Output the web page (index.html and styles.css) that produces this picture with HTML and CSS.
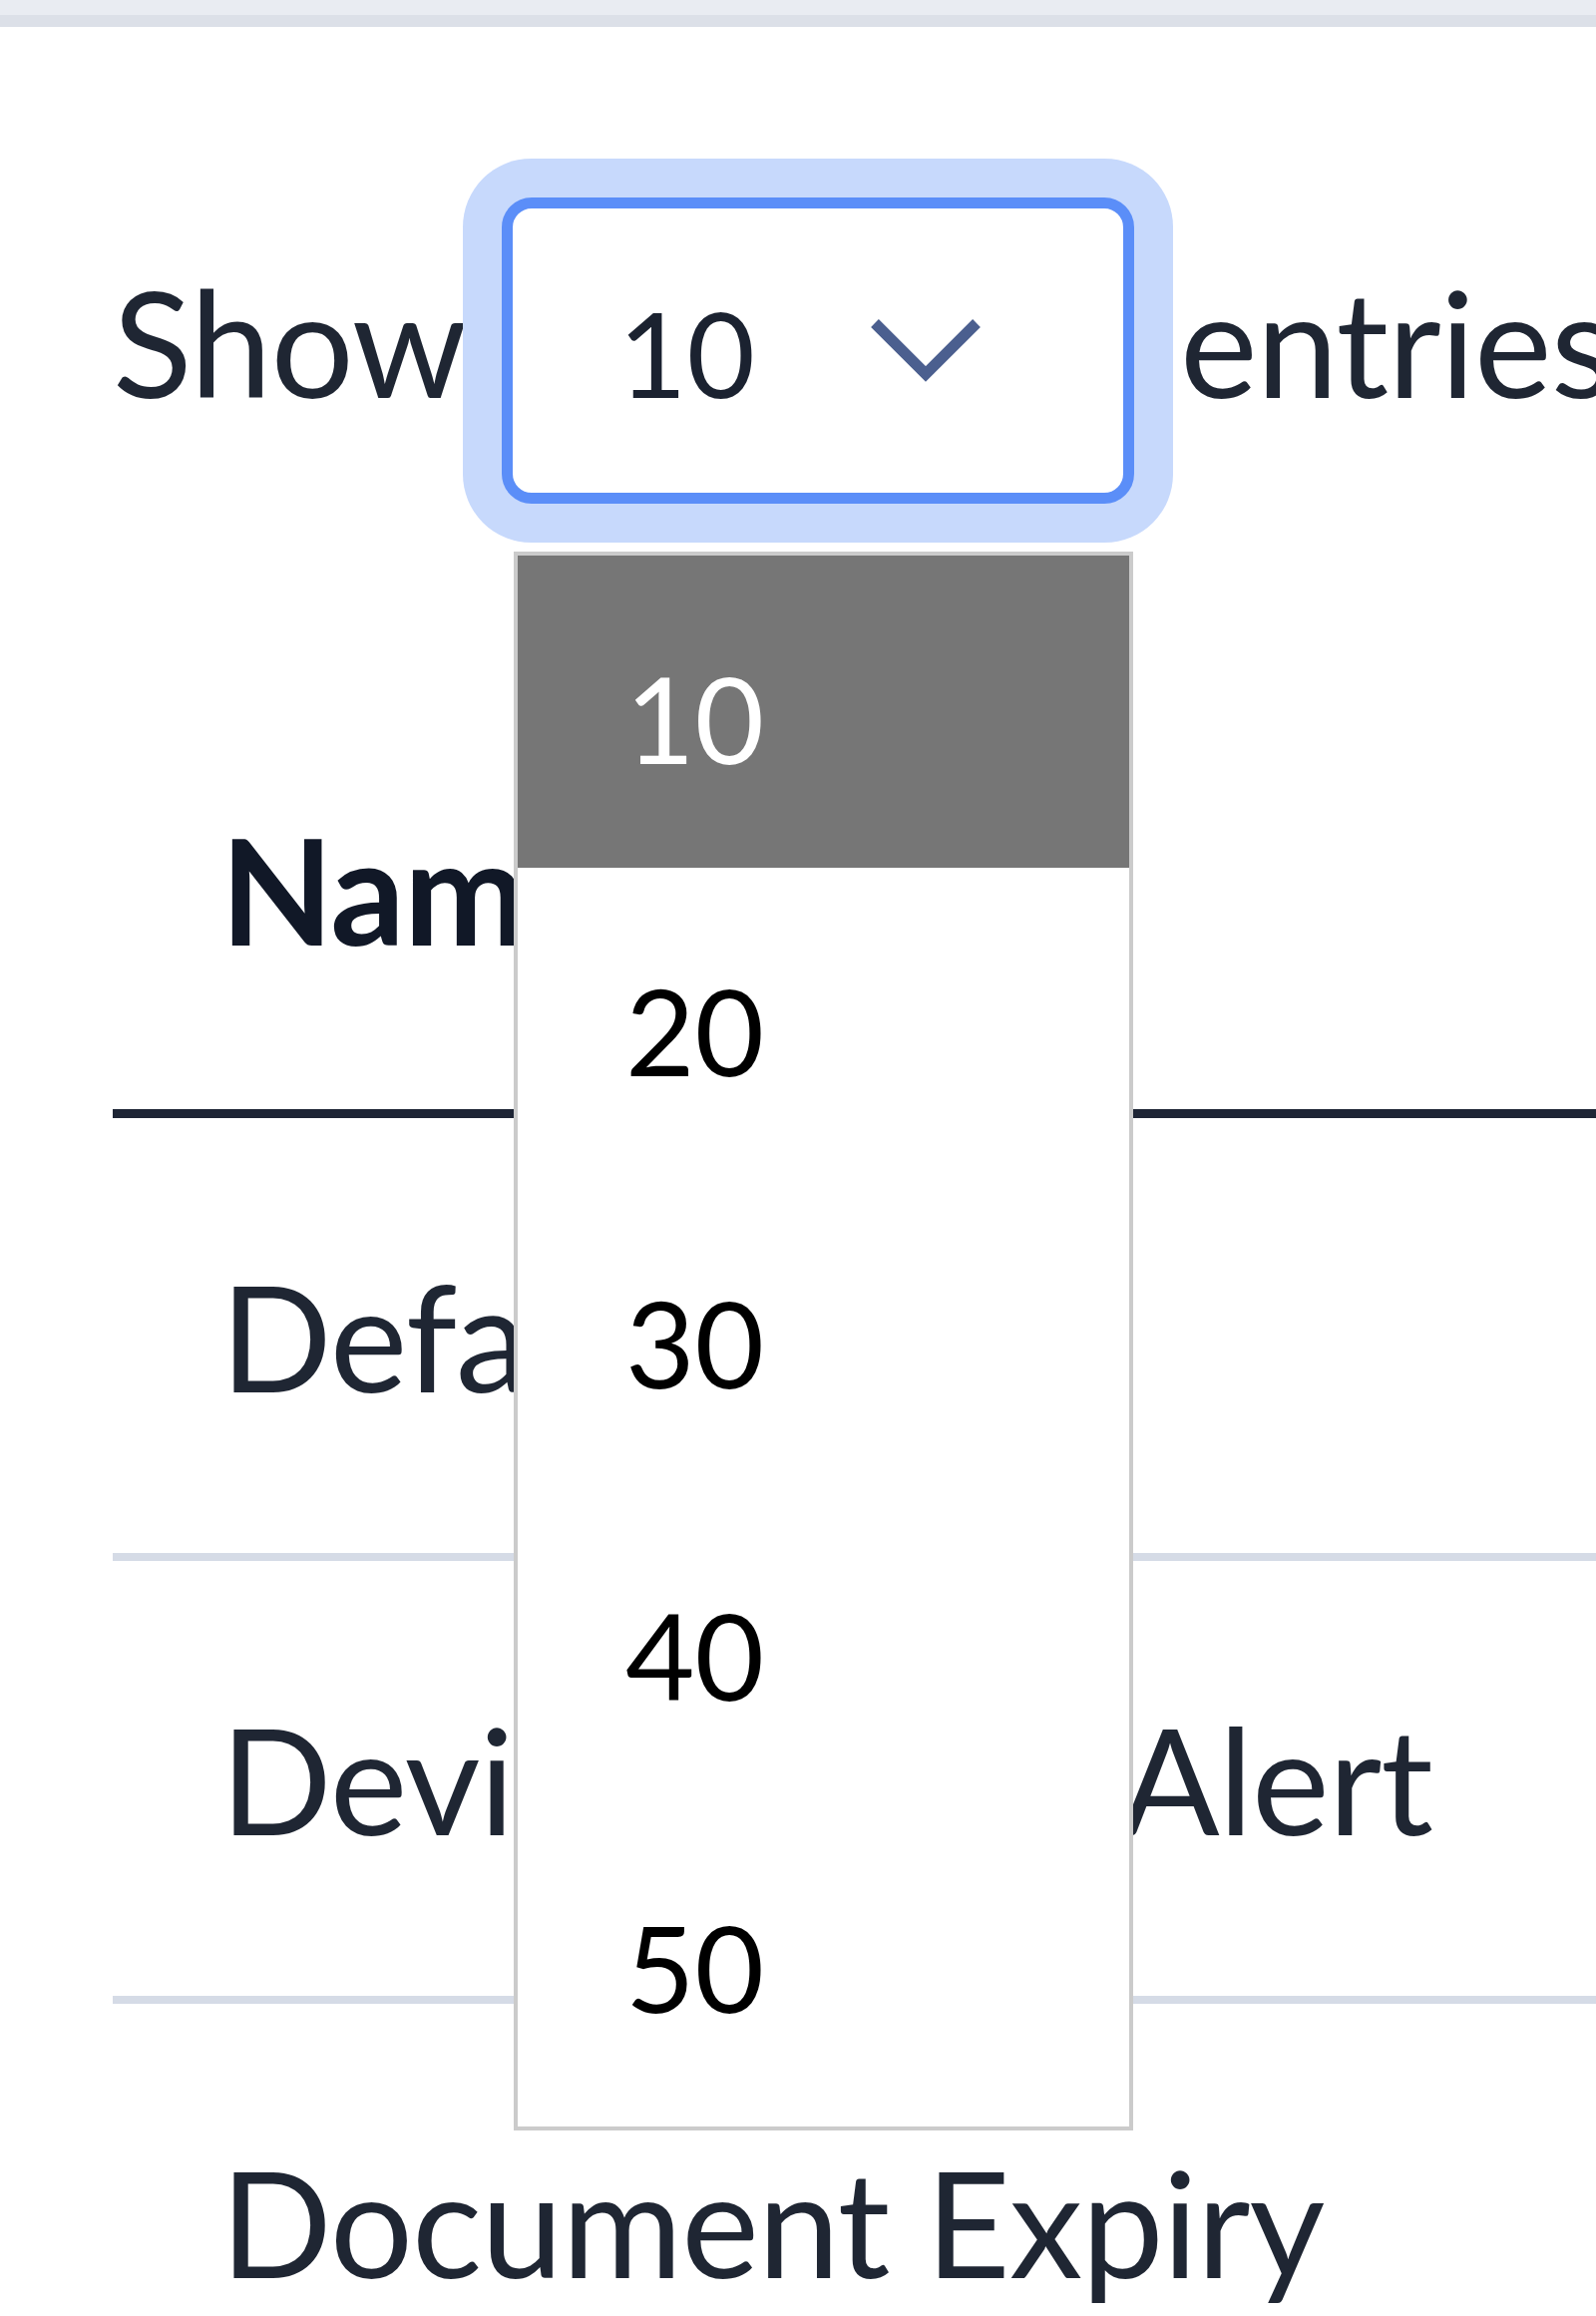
FILE: index.html
```html
<!DOCTYPE html>
<html lang="en">
<head>
<meta charset="utf-8">
<title>Entries</title>
<link rel="stylesheet" href="styles.css">
</head>
<body>
<div class="topbar"></div>
<div class="page">
  <div class="toolbar">
    <span class="label">Show</span>
    <div class="select">
      <span class="select-value">10</span>
      <svg class="chevron" width="118" height="70" viewBox="0 0 118 70" aria-hidden="true">
        <polyline points="8,9 59,60 110,9" fill="none" stroke="#4b5f8f" stroke-width="11" stroke-linejoin="miter"/>
      </svg>
      <ul class="options">
        <li class="option option-active">10</li>
        <li class="option">20</li>
        <li class="option">30</li>
        <li class="option">40</li>
        <li class="option">50</li>
      </ul>
    </div>
    <span class="label-after">entries</span>
  </div>
  <table class="table">
    <thead>
      <tr><th>Name</th></tr>
    </thead>
    <tbody>
      <tr><td>Default Alert</td></tr>
      <tr><td>Device Expiry Alert</td></tr>
      <tr><td>Document Expiry</td></tr>
    </tbody>
  </table>
</div>
</body>
</html>
```

FILE: styles.css
```css
html, body {
  margin: 0;
  padding: 0;
  background: #ffffff;
}

body {
  overflow: hidden;
  font-family: "Lato", "Open Sans", sans-serif;
  font-size: 147px;
  letter-spacing: -1px;
  color: #1f2633;
}

.topbar {
  height: 15px;
  background: #e9ecf2;
  border-bottom: 12px solid #dce0e8;
}

.page {
  padding-left: 113px;
}

.toolbar {
  display: flex;
  align-items: baseline;
  padding-top: 171px;
  white-space: nowrap;
}

.label {
  flex: 0 0 390px;
  width: 390px;
  line-height: 176px;
}

.label-after {
  margin-left: 46px;
  line-height: 176px;
}

.select {
  position: relative;
  flex: 0 0 auto;
  box-sizing: border-box;
  width: 634px;
  height: 307px;
  display: flex;
  align-items: center;
  padding-left: 106px;
  padding-right: 139px;
  border: 11px solid #5b8ef8;
  border-radius: 30px;
  box-shadow: 0 0 0 39px #c7d9fc;
  background: #ffffff;
  font-size: 118px;
  letter-spacing: 0;
  color: #1b2230;
}

.select-value {
  line-height: 142px;
  padding-top: 4px;
}

.chevron {
  display: block;
  margin-left: auto;
  margin-top: -4px;
}

.options {
  position: absolute;
  z-index: 10;
  left: 1px;
  top: 344px;
  width: 621px;
  box-sizing: border-box;
  margin: 0;
  padding: 0 0 10px 0;
  list-style: none;
  background: #ffffff;
  border: 4px solid #cbcbcb;
  font-size: 120px;
  letter-spacing: 0;
  color: #000000;
}

.option {
  box-sizing: border-box;
  height: 313px;
  display: flex;
  align-items: center;
  padding-left: 108px;
  padding-top: 12px;
  line-height: 144px;
}

.option-active {
  background: #767676;
  color: #ffffff;
}

.table {
  margin-top: 167px;
  width: 1600px;
  border-collapse: separate;
  border-spacing: 0;
  white-space: nowrap;
}

.table th,
.table td {
  text-align: left;
  line-height: 176px;
  padding: 130px 0 130px 108px;
}

.table th {
  font-weight: 700;
  color: #111827;
  padding-top: 131px;
  padding-bottom: 133px;
  border-bottom: 9px solid #1e2535;
}

.table td {
  font-weight: 400;
  border-bottom: 8px solid #d5dbe6;
}
```
